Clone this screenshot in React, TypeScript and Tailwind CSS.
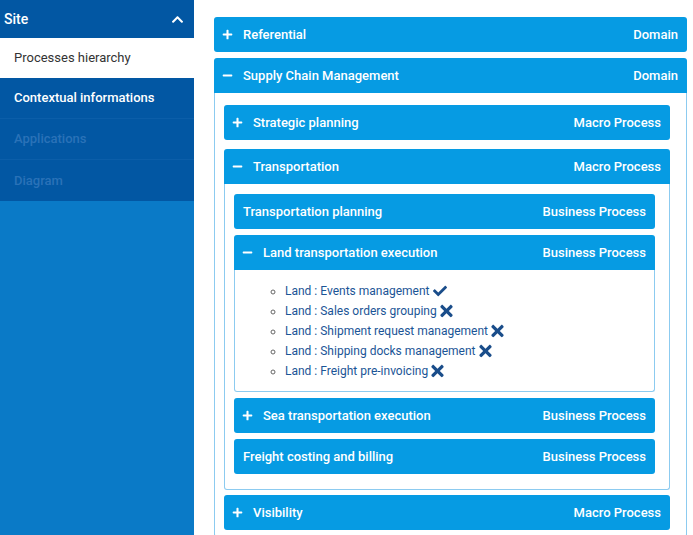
import { FaPlus, FaMinus, FaCheck, FaTimes, FaChevronUp } from 'react-icons/fa';
import type { ReactNode } from 'react';

const font = { fontFamily: 'Roboto, "Liberation Sans", sans-serif' };

type BarProps = { title: string; kind: string; icon?: 'plus' | 'minus'; open?: boolean };

const Bar = ({ title, kind, icon, open }: BarProps) => (
    <div
        className={`flex h-[35px] items-center justify-between bg-[#069be3] pl-[8px] pr-[9px] text-[13px] font-medium text-white ${
            open ? 'rounded-t-[3px]' : 'rounded-[3px]'
        }`}
    >
        <div className="flex items-center">
            {icon === 'plus' && <FaPlus className="mr-[10px] h-[11px] w-[11px]" />}
            {icon === 'minus' && <FaMinus className="mr-[10px] h-[11px] w-[11px]" />}
            <span className={icon ? '' : 'pl-px'}>{title}</span>
        </div>
        <span>{kind}</span>
    </div>
);

const Body = ({ children, className = '' }: { children: ReactNode; className?: string }) => (
    <div className={`rounded-b-[3px] border border-t-0 border-[#8ccbf0] bg-white ${className}`}>{children}</div>
);

const items: { label: string; ok: boolean }[] = [
    { label: 'Land : Events management', ok: true },
    { label: 'Land : Sales orders grouping', ok: false },
    { label: 'Land : Shipment request management', ok: false },
    { label: 'Land : Shipping docks management', ok: false },
    { label: 'Land : Freight pre-invoicing', ok: false },
];

export default function App() {
    return (
        <div className="flex h-[535px] w-[693px] overflow-hidden bg-white" style={font}>
            {/* sidebar */}
            <aside className="flex w-[194px] shrink-0 flex-col bg-[#0a7ac7]">
                <div className="flex h-[38px] items-center justify-between bg-[#0257a3] pl-[4px] pr-[10px] text-[14px] font-medium text-white">
                    <span>Site</span>
                    <FaChevronUp className="h-[13px] w-[13px]" />
                </div>
                <div className="flex h-[40px] items-center bg-white pb-px pl-[14px] text-[13px] text-[#333]">Processes hierarchy</div>
                <div className="flex h-[41px] items-center border-b border-[#0b5ea9] bg-[#0257a3] pl-[14px] text-[13px] font-medium text-white">
                    Contextual informations
                </div>
                <div className="flex h-[41px] items-center border-b border-[#0b5ea9] bg-[#0257a3] pl-[14px] text-[13px] font-medium text-[#2a72b8]">
                    Applications
                </div>
                <div className="flex h-[41px] items-center bg-[#0257a3] pl-[14px] text-[13px] font-medium text-[#2a72b8]">
                    Diagram
                </div>
            </aside>

            {/* main */}
            <main className="flex-1 pl-[20px] pr-[6px] pt-[17px]">
                <Bar title="Referential" kind="Domain" icon="plus" />
                <div className="mt-[6px]">
                    <Bar title="Supply Chain Management" kind="Domain" icon="minus" open />
                    <Body className="pb-[6px] pl-[9px] pr-[16px] pt-[12px]">
                        <Bar title="Strategic planning" kind="Macro Process" icon="plus" />
                        <div className="mt-[9px]">
                            <Bar title="Transportation" kind="Macro Process" icon="minus" open />
                            <Body className="pb-[15px] pl-[9px] pr-[14px] pt-[10px]">
                                <Bar title="Transportation planning" kind="Business Process" />
                                <div className="mt-[6px]">
                                    <Bar title="Land transportation execution" kind="Business Process" icon="minus" open />
                                    <Body className="pb-[10px] pt-[11px]">
                                        <ul className="list-[circle] pl-[50px] text-[12px] leading-[20px] text-[#1b5596] marker:text-[#666]">
                                            {items.map((it) => (
                                                <li key={it.label}>
                                                    <span className="inline-flex items-center">
                                                        {it.label}
                                                        {it.ok ? (
                                                            <FaCheck className="ml-[4px] h-[14px] w-[14px] text-[#1a4d8a]" />
                                                        ) : (
                                                            <FaTimes className="ml-[3px] h-[18px] w-[13px] text-[#1a4d8a]" />
                                                        )}
                                                    </span>
                                                </li>
                                            ))}
                                        </ul>
                                    </Body>
                                </div>
                                <div className="mt-[6px]">
                                    <Bar title="Sea transportation execution" kind="Business Process" icon="plus" />
                                </div>
                                <div className="mt-[6px]">
                                    <Bar title="Freight costing and billing" kind="Business Process" />
                                </div>
                            </Body>
                        </div>
                        <div className="mt-[5px]">
                            <Bar title="Visibility" kind="Macro Process" icon="plus" />
                        </div>
                    </Body>
                </div>
            </main>
        </div>
    );
}
